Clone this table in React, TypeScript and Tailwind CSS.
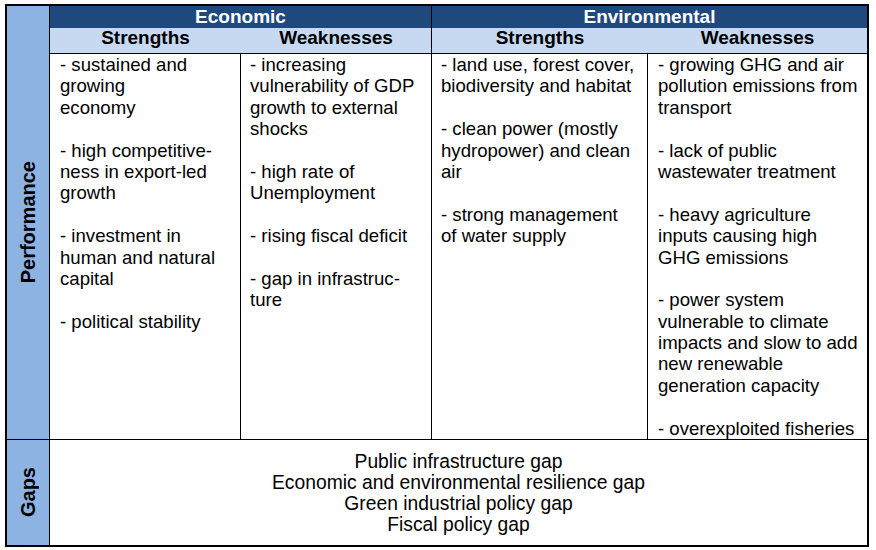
const econStrengths = [
  "- sustained and",
  "growing",
  "economy",
  "",
  "- high competitive-",
  "ness in export-led",
  "growth",
  "",
  "- investment in",
  "human and natural",
  "capital",
  "",
  "- political stability",
];

const econWeaknesses = [
  "- increasing",
  "vulnerability of GDP",
  "growth to external",
  "shocks",
  "",
  "- high rate of",
  "Unemployment",
  "",
  "- rising fiscal deficit",
  "",
  "- gap in infrastruc-",
  "ture",
];

const envStrengths = [
  "- land use, forest cover,",
  "biodiversity and habitat",
  "",
  "- clean power (mostly",
  "hydropower) and clean",
  "air",
  "",
  "- strong management",
  "of water supply",
];

const envWeaknesses = [
  "- growing GHG and air",
  "pollution emissions from",
  "transport",
  "",
  "- lack of public",
  "wastewater treatment",
  "",
  "- heavy agriculture",
  "inputs causing high",
  "GHG emissions",
  "",
  "- power system",
  "vulnerable to climate",
  "impacts and slow to add",
  "new renewable",
  "generation capacity",
  "",
  "- overexploited fisheries",
];

const gaps = [
  "Public infrastructure gap",
  "Economic and environmental resilience gap",
  "Green industrial policy gap",
  "Fiscal policy gap",
];

function Lines({ lines }: { lines: string[] }) {
  return (
    <div>
      {lines.map((l, i) => (
        <div key={i} className="h-[21.4px] whitespace-nowrap">
          {l}
        </div>
      ))}
    </div>
  );
}

export default function App() {
  return (
    <div className="w-[876px] h-[550px] bg-white pl-[5px] pt-[4px] font-['Liberation_Sans',Arial,sans-serif] text-black">
      <div className="w-[864px] border-2 border-black grid grid-cols-[43px_191px_191px_216px_219px] grid-rows-[22px_26px_386px_105px]">
        <div className="row-span-3 bg-[#8db3e2] border-r border-b border-black flex items-center justify-center">
          <span className="[writing-mode:vertical-rl] rotate-180 font-bold text-[20px] leading-none">
            Performance
          </span>
        </div>

        <div className="col-span-2 bg-[#1f497d] border-r border-black text-white font-bold text-[19px] flex items-center justify-center">
          Economic
        </div>
        <div className="col-span-2 bg-[#1f497d] text-white font-bold text-[19px] flex items-center justify-center">
          Environmental
        </div>

        <div className="bg-[#c6d9f1] border-b border-black font-bold text-[19px] flex items-end justify-center pb-px">
          Strengths
        </div>
        <div className="bg-[#c6d9f1] border-b border-r border-black font-bold text-[19px] flex items-end justify-center pb-px">
          Weaknesses
        </div>
        <div className="bg-[#c6d9f1] border-b border-black font-bold text-[19px] flex items-end justify-center pb-px">
          Strengths
        </div>
        <div className="bg-[#c6d9f1] border-b border-black font-bold text-[19px] flex items-end justify-center pb-px">
          Weaknesses
        </div>

        <div className="border-r border-b border-black pl-[10px] text-[18.6px] leading-[21.4px]">
          <Lines lines={econStrengths} />
        </div>
        <div className="border-r border-b border-black pl-[9px] text-[18.6px] leading-[21.4px]">
          <Lines lines={econWeaknesses} />
        </div>
        <div className="border-r border-b border-black pl-[9px] text-[18.6px] leading-[21.4px]">
          <Lines lines={envStrengths} />
        </div>
        <div className="border-b border-black pl-[10px] text-[18.6px] leading-[21.4px]">
          <Lines lines={envWeaknesses} />
        </div>

        <div className="bg-[#8db3e2] border-r border-black flex items-center justify-center">
          <span className="[writing-mode:vertical-rl] rotate-180 font-bold text-[20px] leading-none">
            Gaps
          </span>
        </div>
        <div className="col-span-4 flex flex-col items-center justify-center text-[19.3px] leading-[21px]">
          {gaps.map((g) => (
            <div key={g} className="whitespace-nowrap">
              {g}
            </div>
          ))}
        </div>
      </div>
    </div>
  );
}
